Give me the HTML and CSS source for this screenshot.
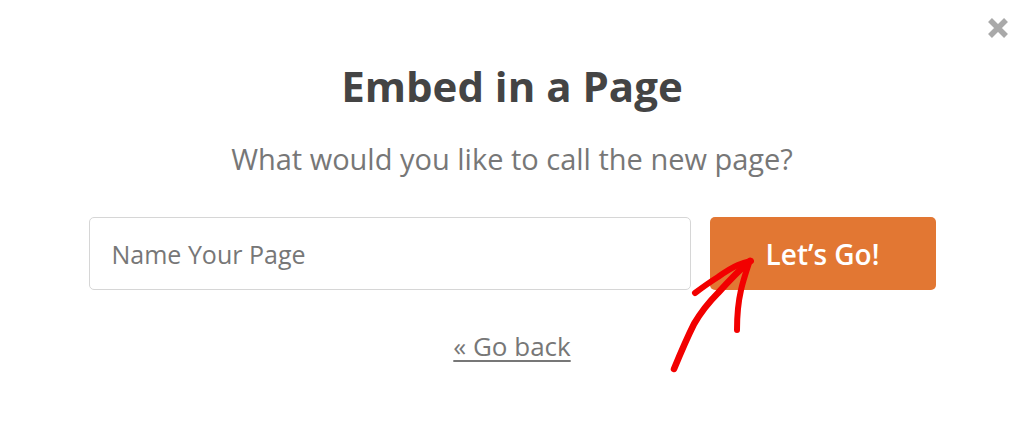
FILE: index.html
```html
<!DOCTYPE html>
<html>
<head>
<meta charset="utf-8">
<link rel="stylesheet" href="styles.css">
</head>
<body>
<div class="modal">
  <button class="close" aria-label="Close">
    <svg width="22" height="22" viewBox="0 0 22 22"><path d="M3 3L19 19M19 3L3 19" stroke="#a9a9a9" stroke-width="5.5" stroke-linecap="butt"/></svg>
  </button>
  <h1 class="title">Embed in a Page</h1>
  <p class="subtitle">What would you like to call the new page?</p>
  <div class="form-row">
    <input class="name-input" type="text" placeholder="Name Your Page">
    <button class="go-btn">Let’s Go!</button>
    <svg class="arrow" width="120" height="140" viewBox="0 0 120 140">
      <path d="M23 129 C 30 112, 36 98, 43 84 C 50 72, 58 62, 67 53 C 76 43, 86 32, 99 21" fill="none" stroke="#f20000" stroke-width="6.5" stroke-linecap="round"/>
      <path d="M44 53 C 52 47, 59 42, 67 37 C 74 32, 80 28, 87 25 C 92 23, 96 22, 100 21" fill="none" stroke="#f20000" stroke-width="6" stroke-linecap="round"/>
      <path d="M98 23 C 95 32, 92 41, 90 50 C 87 63, 86 76, 86 90" fill="none" stroke="#f20000" stroke-width="6" stroke-linecap="round"/>
    </svg>
  </div>
  <a class="back" href="#">« Go back</a>
</div>
</body>
</html>
```
FILE: styles.css
```css
html, body {
  margin: 0;
  padding: 0;
  background: #fff;
}
body {
  font-family: "Open Sans", "Noto Sans", sans-serif;
}
.modal {
  position: relative;
  width: 1024px;
  height: 421px;
  display: flex;
  flex-direction: column;
  align-items: center;
  box-sizing: border-box;
  padding-top: 58px;
}
.close {
  position: absolute;
  top: 17px;
  right: 15px;
  background: none;
  border: 0;
  padding: 0;
  line-height: 0;
}
.title {
  margin: 0;
  font-size: 42px;
  font-weight: 700;
  color: #444;
  line-height: 56px;
}
.subtitle {
  margin: 25px 0 0;
  font-size: 29px;
  color: #777;
  line-height: 40px;
}
.form-row {
  position: relative;
  display: flex;
  gap: 19px;
  margin-top: 38px;
}
.name-input {
  width: 602px;
  height: 73px;
  box-sizing: border-box;
  border: 1px solid #d6d6d6;
  border-radius: 5px;
  padding: 0 22px;
  font-family: inherit;
  font-size: 25px;
  color: #777;
}
.name-input::placeholder {
  color: #777;
}
.go-btn {
  width: 226px;
  height: 73px;
  background: #e27733;
  border: 0;
  border-radius: 5px;
  color: #fff;
  font-family: inherit;
  font-size: 28px;
  font-weight: 600;
}
.arrow {
  position: absolute;
  left: 562px;
  top: 23px;
  pointer-events: none;
}
.back {
  margin-top: 38px;
  font-size: 26px;
  color: #777;
  text-decoration: underline;
  text-underline-offset: 4px;
}
```
